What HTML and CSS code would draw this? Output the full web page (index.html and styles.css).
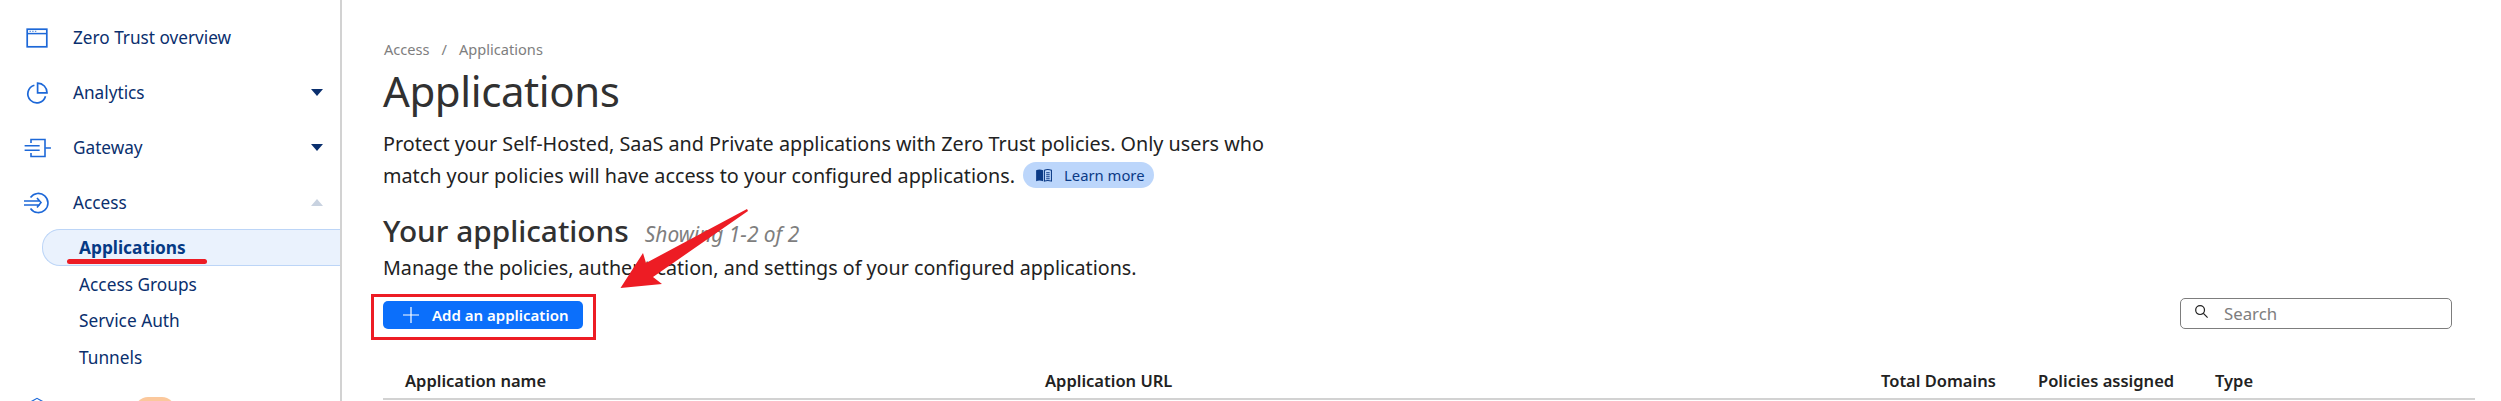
FILE: index.html
```html
<!DOCTYPE html>
<html lang="en">
<head>
<meta charset="utf-8">
<title>Applications</title>
<link rel="stylesheet" href="styles.css">
</head>
<body>
<div class="app">
  <aside class="sidebar">
    <nav class="nav">
      <a class="nav-item">
        <svg class="nav-icon" viewBox="0 0 24 24"><rect x="2.2" y="3.2" width="19.6" height="17.6" fill="none" stroke="#1d68d8" stroke-width="1.7"/><path d="M2.5 7.6h19" stroke="#1d68d8" stroke-width="1.5"/><path d="M4.5 5.4h1.4M7.2 5.4h1.4M9.9 5.4h1.4" stroke="#5f95e3" stroke-width="1.4"/></svg>
        <span class="nav-label">Zero Trust overview</span>
      </a>
      <a class="nav-item">
        <svg class="nav-icon" viewBox="0 0 24 24" fill="none" stroke="#1d68d8" stroke-width="1.7"><path d="M9.4 4.2a9 9 0 1 0 11.1 11.1"/><path d="M12.6 2.2a9.4 9.4 0 0 1 9.4 9.6h-9.4z"/></svg>
        <span class="nav-label">Analytics</span>
        <span class="caret"></span>
      </a>
      <a class="nav-item">
        <svg class="nav-icon" viewBox="0 0 24 24" fill="none" stroke="#1d68d8" stroke-width="1.6"><path d="M6 7V3.500h14v17H6V17"/><path d="M20 12h6M-2 9.800h16M-2 14.200h16" transform="translate(1.500 0) scale(.94 1)"/></svg>
        <span class="nav-label">Gateway</span>
        <span class="caret"></span>
      </a>
      <a class="nav-item">
        <svg class="nav-icon" viewBox="0 0 24 24" fill="none" stroke="#1d68d8" stroke-width="1.6"><path d="M5.500 6.500a9.600 9.600 0 1 1 0 11"/><path d="M-1 10h16M-1 14h16M12 7l4 4.600-4 5"/></svg>
        <span class="nav-label">Access</span>
        <span class="caret caret-up"></span>
      </a>
      <div class="subnav">
        <a class="sub-item is-active">Applications</a>
        <a class="sub-item">Access Groups</a>
        <a class="sub-item">Service Auth</a>
        <a class="sub-item">Tunnels</a>
      </div>
      <a class="nav-item nav-item-cut">
        <svg class="nav-icon" viewBox="0 0 24 24" fill="none" stroke="#1d68d8" stroke-width="1.8"><path d="M3 7l9-5 9 5"/></svg>
        <span class="badge"></span>
      </a>
    </nav>
  </aside>
  <main class="main">
    <div class="crumbs"><span>Access</span><span class="crumb-sep">/</span><span>Applications</span></div>
    <h1 class="title">Applications</h1>
    <p class="lead">Protect your Self-Hosted, SaaS and Private applications with Zero Trust policies. Only users who<br>match your policies will have access to your configured applications.
      <a class="learn"><svg class="learn-icon" viewBox="0 0 20 16"><path d="M1 2.500c2.500-1 5-1 8 0V15c-3-1-5.500-1-8 0z" fill="#0b3a86"/><path d="M10.500 2.500c2.500-1 5-1 8 0V15c-3-1-5.500-1-8 0zM12.500 5.500h4M12.500 7.800h4M12.500 10.100h4M12.500 12.300h4" fill="none" stroke="#0b3a86" stroke-width="1.200"/></svg>Learn more</a>
    </p>
    <div class="section-head">
      <h2 class="section-title">Your applications</h2>
      <span class="count">Showing 1-2 of 2</span>
    </div>
    <p class="section-desc">Manage the policies, authentication, and settings of your configured applications.</p>
    <div class="toolbar">
      <button class="add-btn"><svg class="plus" viewBox="0 0 16 16"><path d="M8 0v16M0 8h16" stroke="#fff" stroke-width="1.200"/></svg>Add an application</button>
      <label class="search"><svg class="search-icon" viewBox="0 0 16 16" fill="none" stroke="#222" stroke-width="1.300"><circle cx="6.500" cy="6.500" r="4.700"/><path d="M10 10l4.500 4.500"/></svg><span class="search-text">Search</span></label>
    </div>
    <div class="table-head">
      <span>Application name</span>
      <span>Application URL</span>
      <span>Total Domains</span>
      <span>Policies assigned</span>
      <span>Type</span>
    </div>
  </main>
</div>
<div class="mark-underline"></div>
<div class="mark-box"></div>
<svg class="mark-arrow" viewBox="0 0 140 90"><polygon points="127,1 128,3 33,69 42,76 0.500,80 23,45 26,55" fill="#ed1c24"/></svg>
</body>
</html>
```
FILE: styles.css
```css
* { box-sizing: border-box; }
html, body { margin: 0; height: 401px; overflow: hidden; background: #fff; }
body { font-family: "Noto Sans", "Open Sans", sans-serif; color: #222; position: relative; }
.app { display: flex; height: 401px; overflow: hidden; }

.sidebar { width: 342px; flex: none; border-right: 2px solid #d2d2d2; padding-top: 10px; }
.nav { display: flex; flex-direction: column; }
.nav-item { display: flex; align-items: center; height: 55px; padding-left: 25px; padding-right: 12px; color: #0a2f6e; font-size: 17.200px; }
.nav-icon { width: 24px; height: 24px; flex: none; overflow: visible; }
.nav-label { margin-left: 24px; flex: 1; }
.caret { width: 0; height: 0; border-left: 6px solid transparent; border-right: 6px solid transparent; border-top: 7px solid #0a2f6e; margin-top: -1px; margin-right: 5px; }
.caret-up { border-top: 0; border-bottom: 7px solid #c8d2e0; }
.subnav { display: flex; flex-direction: column; padding-left: 42px; margin-top: -1px; }
.sub-item { display: flex; align-items: center; height: 36.500px; padding-left: 37px; color: #0a2f6e; font-size: 17.300px; }
.is-active { height: 37px; font-weight: 700; background: #eaf2fd; border: 1px solid #bcd5f7; border-right: 0; border-radius: 18px 0 0 18px; padding-left: 36px; color: #063a85; }
.nav-item-cut { position: relative; margin-top: 2px; height: 40px; align-items: flex-start; padding-top: 19px; }
.nav-item-cut .nav-icon { width: 16px; height: 16px; margin-left: 4px; }
.badge { display: block; width: 40px; height: 26px; margin-left: 90px; margin-top: 0; border-radius: 13px; background: #fbc89c; }

.main { flex: 1; min-width: 0; padding: 38px 26px 0 41px; }
.crumbs { display: flex; gap: 12px; font-size: 14.600px; line-height: 22px; color: #7e7e7e; margin-left: 1px; }
.title { margin: 1px 0 0 0; font-size: 42px; letter-spacing: -.4px; line-height: 60px; font-weight: 400; color: #313131; }
.lead { margin: 7px 0 0 0; font-size: 19.770px; line-height: 32px; color: #222; }
.learn { display: inline-flex; align-items: center; height: 26px; padding: 0 9px 0 12px; margin-left: 3px; border-radius: 13px; background: #bcd6fb; color: #0b3a86; font-size: 14.800px; vertical-align: 1px; }
.learn-icon { width: 18px; height: 14px; margin-right: 11px; }
.section-head { display: flex; align-items: baseline; margin-top: 17px; height: 44px; }
.section-title { margin: 0; font-size: 29.800px; line-height: 44px; font-weight: 500; color: #313131; }
.count { margin-left: 16px; font-size: 20.900px; font-style: italic; color: #7e7e7e; }
.section-desc { margin: 0; font-size: 19.700px; line-height: 30px; color: #222; }
.toolbar { display: flex; align-items: center; justify-content: space-between; margin-top: 17.500px; margin-right: 23px; }
.add-btn { display: flex; align-items: center; height: 28px; width: 200px; padding: 0 0 0 20px; border: 0; border-radius: 5px; background: #0b6ffb; color: #fff; font: 600 15px "Noto Sans", sans-serif; }
.plus { width: 16px; height: 16px; margin-right: 13px; }
.search { display: flex; align-items: center; width: 272px; height: 31px; margin-top: -3px; padding-left: 13px; border: 1px solid #7d7d7d; border-radius: 5px; }
.search-icon { width: 15px; height: 15px; margin-right: 15px; margin-top: -4px; }
.search-text { font-size: 16.800px; color: #7e7e7e; }
.table-head { display: grid; grid-template-columns: 640px 836px 157px 177px 1fr; align-items: center; height: 38px; padding-left: 22px; margin-top: 33.500px; border-bottom: 2px solid #d2d2d2; font-size: 16.500px; font-weight: 600; color: #222; }

.mark-underline { position: absolute; left: 67px; top: 259px; width: 140px; height: 5px; border-radius: 3px; background: #ed1c24; }
.mark-box { position: absolute; left: 371px; top: 294px; width: 225px; height: 46px; border: 3px solid #ed1c24; }
.mark-arrow { position: absolute; left: 620px; top: 208px; width: 140px; height: 90px; }
```
